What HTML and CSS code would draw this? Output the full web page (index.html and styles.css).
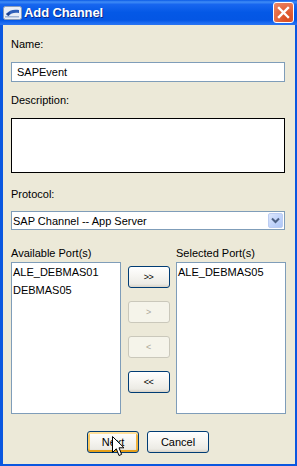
FILE: index.html
```html
<!DOCTYPE html>
<html lang="en">
<head>
    <meta charset="UTF-8">
    <title>Add Channel</title>
    <link rel="stylesheet" href="styles.css">
</head>
<body>
    <div class="window">
        <div class="titlebar">
            <svg class="app-icon" width="20" height="16" viewBox="0 0 20 16">
                <rect x="0.5" y="1.5" width="18" height="13" rx="2" fill="#e9eef6" stroke="#8a9cb8"/>
                <path d="M3 9 C6 5, 11 4, 16 5 L16 8 C12 7, 8 8, 5 11 Z" fill="#2f5fb8"/>
                <path d="M3 9 L7 7 L6 11 Z" fill="#1d3f8a"/>
                <rect x="2" y="11" width="14" height="1.5" fill="#9fb3d3"/>
            </svg>
            <span class="title">Add Channel</span>
            <div class="close-btn">
                <svg width="13" height="13" viewBox="0 0 13 13">
                    <path d="M2 2 L11 11 M11 2 L2 11" stroke="#fff" stroke-width="2.4" stroke-linecap="square"/>
                </svg>
            </div>
        </div>

        <div class="content">
            <div class="label">Name:</div>
            <div class="textbox">SAPEvent</div>

            <div class="label label-desc">Description:</div>
            <div class="textarea"></div>

            <div class="label label-protocol">Protocol:</div>
            <div class="select">
                <span class="select-text">SAP Channel -- App Server</span>
                <span class="select-arrow">
                    <svg width="9" height="7" viewBox="0 0 9 7">
                        <path d="M1 1.5 L4.5 5 L8 1.5" fill="none" stroke="#4d6185" stroke-width="2"/>
                    </svg>
                </span>
            </div>

            <div class="ports">
                <div class="label">Available Port(s)</div>
                <div></div>
                <div class="label">Selected Port(s)</div>

                <div class="listbox">
                    <div class="item">ALE_DEBMAS01</div>
                    <div class="item">DEBMAS05</div>
                </div>
                <div class="move-buttons">
                    <div class="btn btn-small">&gt;&gt;</div>
                    <div class="btn btn-small disabled">&gt;</div>
                    <div class="btn btn-small disabled">&lt;</div>
                    <div class="btn btn-small">&lt;&lt;</div>
                </div>
                <div class="listbox">
                    <div class="item">ALE_DEBMAS05</div>
                </div>
            </div>

            <div class="footer">
                <div class="btn btn-default">Next</div>
                <div class="btn btn-cancel">Cancel</div>
            </div>
        </div>

        <svg class="cursor" width="13" height="21" viewBox="0 0 13 21">
            <path d="M0.5 0.5 L0.5 16.5 L4.3 12.8 L7 19.5 L9.6 18.4 L7 11.8 L12 11.8 Z" fill="#fff" stroke="#000" stroke-width="1"/>
        </svg>
    </div>
</body>
</html>
```

FILE: styles.css
```css
body {
    margin: 0;
    padding: 0;
    background-color: #ffffff;
    font-family: "Liberation Sans", Arial, sans-serif;
    font-size: 11px;
    color: #000;
}
.window {
    position: relative;
    width: 297px;
    height: 466px;
    background-color: #0a57e0;
    overflow: hidden;
}
.titlebar {
    height: 25px;
    display: flex;
    align-items: center;
    background: linear-gradient(#0a5ae6 0%, #3f8cf6 8%, #1766ef 18%, #0458e6 50%, #0456e4 80%, #1d6cf2 92%, #2b74f0 100%);
}
.app-icon {
    margin-left: 3px;
    margin-top: 1px;
}
.title {
    margin-left: 1px;
    color: #fff;
    font-weight: bold;
    font-size: 13px;
    text-shadow: 1px 1px 0 #0a2a8a;
    letter-spacing: -0.1px;
}
.close-btn {
    margin-left: auto;
    margin-right: 3px;
    width: 19px;
    height: 19px;
    border: 1px solid #fff;
    border-radius: 3px;
    background: radial-gradient(circle at 70% 80%, #d94a1e 0%, #e2643c 45%, #ec8a6c 100%);
    display: flex;
    align-items: center;
    justify-content: center;
}
.content {
    height: 439px;
    margin: 0 2px 0 3px;
    padding: 13px 10px 0 8px;
    box-sizing: border-box;
    background-color: #ece9d8;
}
.label {
    line-height: 13px;
    height: 13px;
}
.label-desc { margin-top: 12px; }
.label-protocol { margin-top: 15px; }
.textbox {
    margin-top: 11px;
    height: 20px;
    box-sizing: border-box;
    border: 1px solid #7f9db9;
    background-color: #fff;
    padding-left: 5px;
    line-height: 18px;
}
.textarea {
    margin-top: 11px;
    height: 55px;
    box-sizing: border-box;
    border: 1px solid #000;
    background-color: #fff;
}
.select {
    margin-top: 10px;
    height: 19px;
    box-sizing: border-box;
    border: 1px solid #7f9db9;
    background-color: #fff;
    display: flex;
    align-items: center;
    padding-left: 1px;
}
.select-text {
    flex: 1;
}
.select-arrow {
    width: 15px;
    height: 15px;
    margin-right: 1px;
    border-radius: 2px;
    background: linear-gradient(135deg, #dce6fc 0%, #c3d5fb 50%, #aec6f6 100%);
    border: 1px solid #bccdf2;
    box-sizing: border-box;
    display: flex;
    align-items: center;
    justify-content: center;
}
.ports {
    margin-top: 17px;
    display: grid;
    grid-template-columns: 110px 55px 110px;
    grid-template-rows: 13px 152px;
    row-gap: 2px;
}
.listbox {
    border: 1px solid #7f9db9;
    background-color: #fff;
    padding-left: 1px;
}
.item {
    line-height: 18px;
}
.move-buttons {
    display: flex;
    flex-direction: column;
    align-items: center;
    gap: 13px;
    padding-top: 4px;
}
.btn {
    box-sizing: border-box;
    height: 22px;
    border: 1px solid #003c74;
    border-radius: 3px;
    background: linear-gradient(#ffffff 0%, #f6f5f1 45%, #ecebe5 85%, #d8d2c6 100%);
    display: flex;
    align-items: center;
    justify-content: center;
}
.btn-small {
    width: 42px;
    font-size: 9px;
    letter-spacing: -0.5px;
}
.btn.disabled {
    border-color: #cac8bb;
    background: #f5f4ea;
    color: #aca899;
}
.footer {
    margin-top: 17px;
    display: flex;
    justify-content: center;
    gap: 8px;
}
.btn-default {
    width: 52px;
    box-shadow: inset 0 2px 0 #ffe09a, inset 0 -2px 0 #e5a01a, inset 2px 0 0 #f8c860, inset -2px 0 0 #f0b440;
}
.btn-cancel {
    width: 62px;
}
.cursor {
    position: absolute;
    left: 112px;
    top: 436px;
}
```
